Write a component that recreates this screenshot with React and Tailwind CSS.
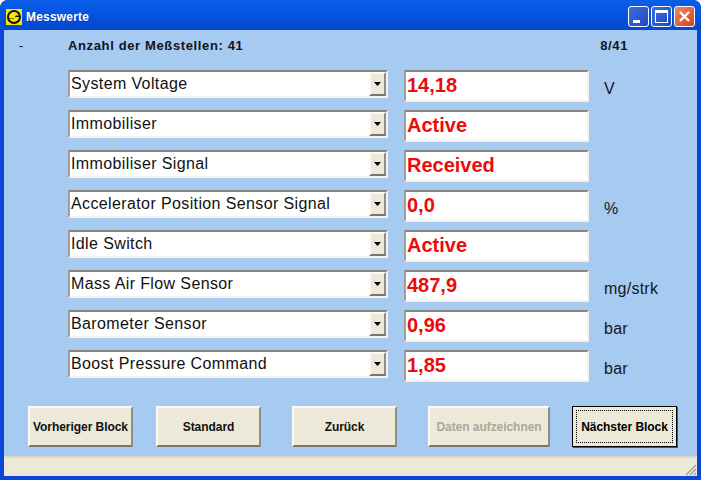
const rows = [
  ["System Voltage", "14,18", "V"],
  ["Immobiliser", "Active", ""],
  ["Immobiliser Signal", "Received", ""],
  ["Accelerator Position Sensor Signal", "0,0", "%"],
  ["Idle Switch", "Active", ""],
  ["Mass Air Flow Sensor", "487,9", "mg/strk"],
  ["Barometer Sensor", "0,96", "bar"],
  ["Boost Pressure Command", "1,85", "bar"],
];

const sunken = "border-t-2 border-l-2 border-t-[#85837b] border-l-[#a09e96] border-b-2 border-r-2 border-b-[#f4f2ea] border-r-[#f4f2ea]";
const raised = "border-t-2 border-l-2 border-t-[#fbfaf5] border-l-[#fbfaf5] border-b-2 border-r-2 border-b-[#77756e] border-r-[#8f8d85]";

function Row({ name, value, unit }) {
  return (
    <div className="flex h-[32px] items-start">
      <div className={`ml-[64px] flex h-[28px] w-[320px] items-center bg-white ${sunken}`}>
        <span className="flex-1 truncate pl-[1px] text-[16px] tracking-[0.38px] text-[#111]">{name}</span>
        <span className={`flex h-[24px] w-[17px] items-center justify-center bg-[#ece9d8] ${raised}`}>
          <svg width="7" height="4" viewBox="0 0 7 4"><path d="M0 0h7L3.5 4z" fill="#000" /></svg>
        </span>
      </div>
      <div className={`ml-[16px] flex h-[32px] w-[185px] items-center bg-white pb-[3px] pl-[1px] text-[20px] font-bold text-[#ee0a0a] ${sunken}`}>
        {value}
      </div>
      <div className="ml-[15px] pt-[10px] text-[16px] leading-[18px] tracking-[0.25px] text-[#15151f]">{unit}</div>
    </div>
  );
}

function Btn({ w, children, disabled, focus }) {
  if (focus) {
    return (
      <div className={`flex h-[41px] items-center justify-center border border-black bg-[#ece9d8] p-[3px] shadow-[1px_1px_0_#555] ${w}`}>
        <div className="flex h-full w-full items-center justify-center border border-dotted border-black text-[12px] font-bold tracking-[-0.05px] text-black">
          {children}
        </div>
      </div>
    );
  }
  return (
    <div className={`flex h-[41px] items-center justify-center bg-[#ece9d8] text-[12px] font-bold tracking-[-0.05px] ${raised} ${w} ${disabled ? "text-[#aca899]" : "text-[#111]"}`}>
      {children}
    </div>
  );
}

export default function App() {
  return (
    <div className="flex h-[480px] w-[701px] flex-col overflow-hidden rounded-t-[8px] bg-[#0a46d8] font-['Liberation_Sans',Arial,sans-serif]">
      <div className="flex h-[30px] shrink-0 items-center bg-gradient-to-b from-[#0a5ee8] via-[#0453e0] to-[#0348d0] pl-[6px] pr-[6px] pt-[3px]">
        <svg width="16" height="16" viewBox="0 0 16 16" className="shrink-0">
          <rect width="16" height="16" fill="#f7e40a" />
          <circle cx="8" cy="8" r="6" fill="none" stroke="#111" strokeWidth="2" />
          <path d="M2 9 L8 9 L10 6.5 L14 6.5 L14 8 L9 8 L8 9.5 L2 9.5z" fill="#111" />
        </svg>
        <span className="ml-[4px] flex-1 text-[12px] font-bold tracking-[0.2px] text-white [text-shadow:1px_1px_#0a3ab0]">Messwerte</span>
        <div className="flex gap-[2px]">
          <div className="relative h-[21px] w-[21px] rounded-[3px] border border-white bg-gradient-to-br from-[#3c6ee0] to-[#1c48c4]">
            <div className="absolute bottom-[3px] left-[4px] h-[3px] w-[7px] bg-white" />
          </div>
          <div className="flex h-[21px] w-[21px] items-center justify-center rounded-[3px] border border-white bg-gradient-to-br from-[#3c6ee0] to-[#1c48c4]">
            <div className="h-[13px] w-[13px] border border-t-[3px] border-white" />
          </div>
          <div className="flex h-[21px] w-[21px] items-center justify-center rounded-[3px] border border-white bg-gradient-to-br from-[#e88a68] to-[#d0401c]">
            <svg width="13" height="13" viewBox="0 0 13 13"><path d="M2 2l9 9M11 2l-9 9" stroke="#fff" strokeWidth="2.4" /></svg>
          </div>
        </div>
      </div>

      <div className="mx-[4px] flex flex-1 flex-col bg-[#a6caf0]">
        <div className="flex h-[40px] shrink-0 pt-[7px] text-[13px] font-bold leading-[18px] tracking-[0.63px] text-[#11131c]">
          <span className="ml-[15px] w-[49px] font-normal">-</span>
          <span className="flex-1">Anzahl der Meßstellen: 41</span>
          <span className="mr-[69px]">8/41</span>
        </div>
        <div className="flex flex-col gap-[8px]">
          {rows.map((r) => (
            <Row key={r[0]} name={r[0]} value={r[1]} unit={r[2]} />
          ))}
        </div>
        <div className="mt-[24px] flex pl-[24px]">
          <Btn w="w-[105px]">Vorheriger Block</Btn>
          <div className="ml-[23px]"><Btn w="w-[105px]">Standard</Btn></div>
          <div className="ml-[31px]"><Btn w="w-[105px]">Zurück</Btn></div>
          <div className="ml-[31px]"><Btn w="w-[122px]" disabled>Daten aufzeichnen</Btn></div>
          <div className="ml-[22px]"><Btn w="w-[105px]" focus>Nächster Block</Btn></div>
        </div>
        <div className="mt-auto flex h-[20px] items-end justify-end border-t-2 border-t-[#dcdad0] bg-[#ece9d8]">
          <svg width="13" height="13" viewBox="0 0 13 13">
            <path d="M12 2L2 12M12 6L6 12M12 10L10 12" stroke="#9c9a90" strokeWidth="1.2" />
          </svg>
        </div>
      </div>
      <div className="h-[4px] shrink-0" />
    </div>
  );
}
